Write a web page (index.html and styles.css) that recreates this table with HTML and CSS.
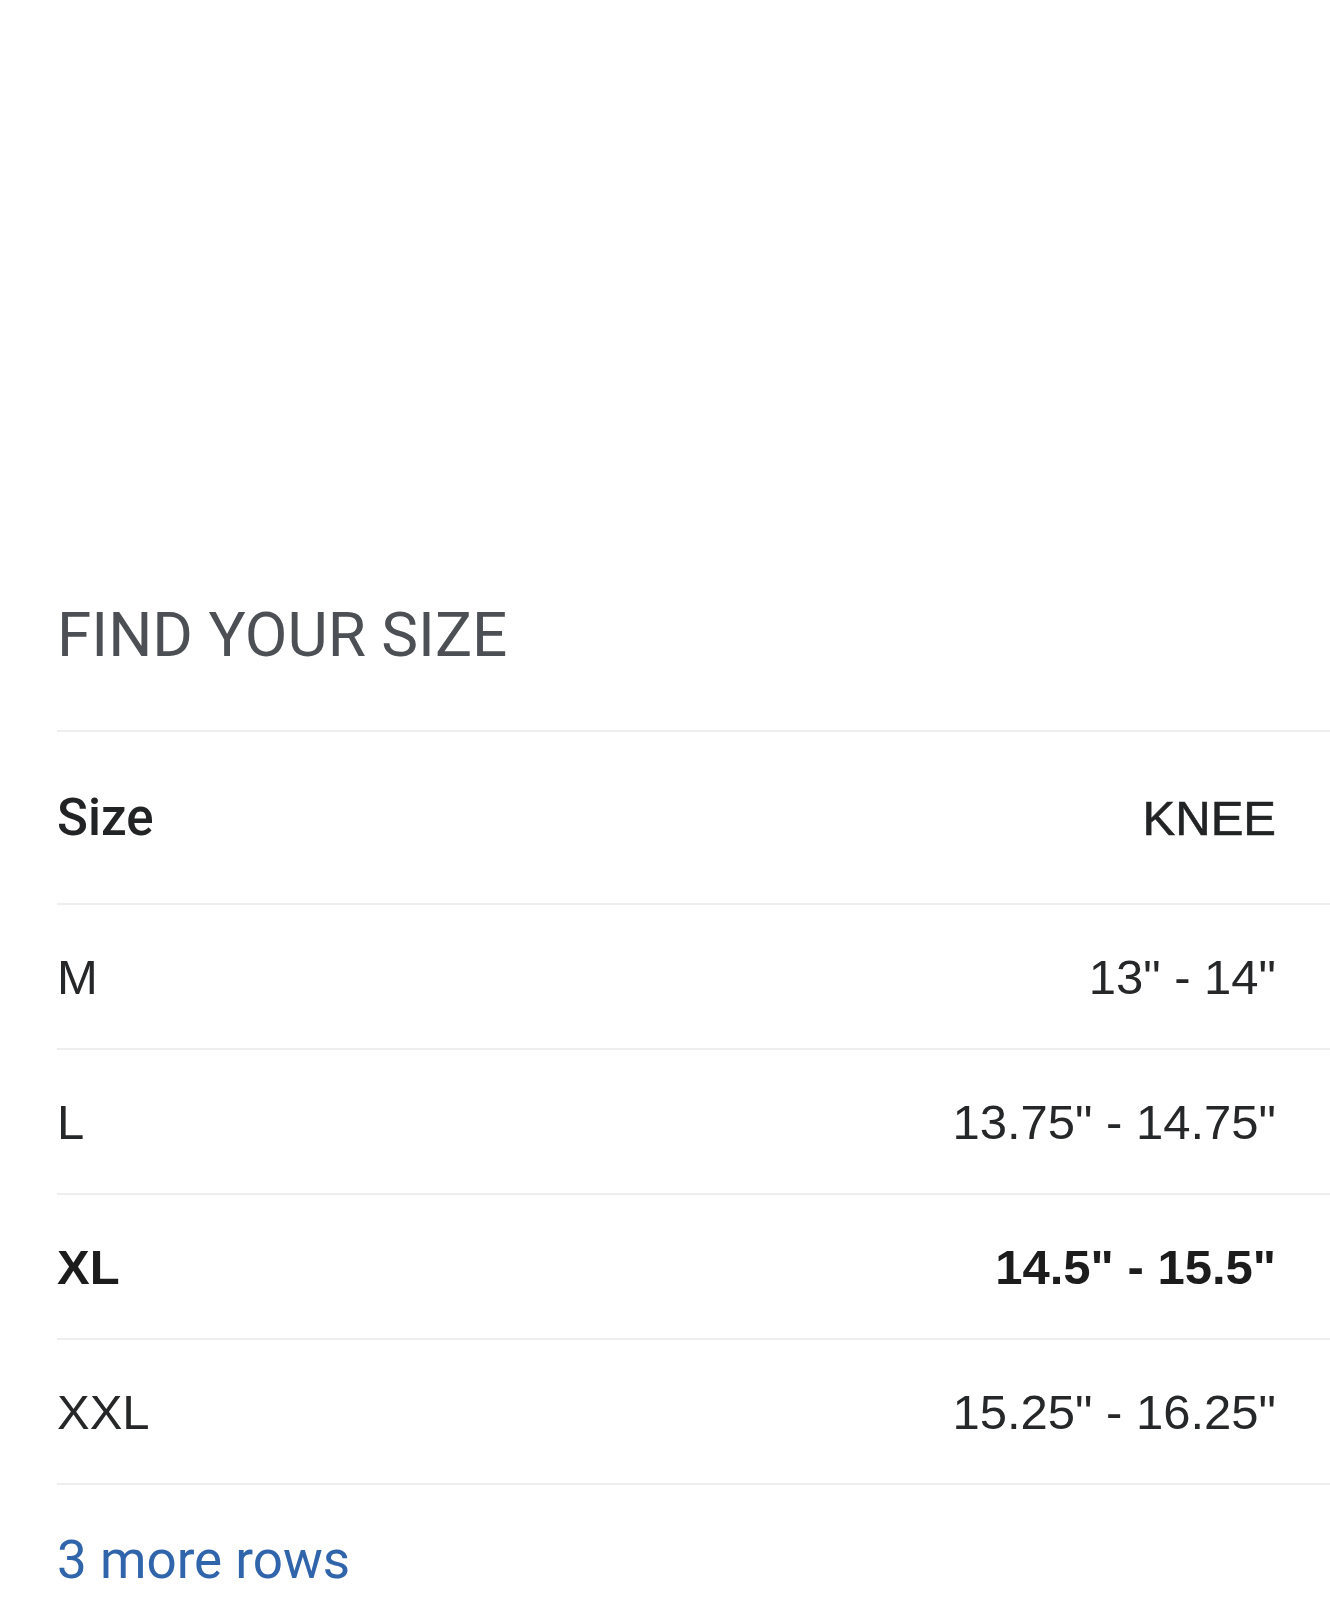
FILE: index.html
```html
<!DOCTYPE html>
<html lang="en">
<head>
<meta charset="utf-8">
<title>Find your size</title>
<link rel="stylesheet" href="styles.css">
</head>
<body>
<main class="page">
  <h2 class="title">FIND YOUR SIZE</h2>
  <div class="table">
    <div class="row head"><span class="cell">Size</span><span class="cell val">KNEE</span></div>
    <div class="row"><span class="cell">M</span><span class="cell val">13" - 14"</span></div>
    <div class="row"><span class="cell">L</span><span class="cell val">13.75" - 14.75"</span></div>
    <div class="row bold"><span class="cell">XL</span><span class="cell val">14.5" - 15.5"</span></div>
    <div class="row"><span class="cell">XXL</span><span class="cell val">15.25" - 16.25"</span></div>
  </div>
  <a class="more" href="#">3 more rows</a>
</main>
</body>
</html>
```
FILE: styles.css
```css
html, body {
  margin: 0;
  padding: 0;
  background: #ffffff;
}
.page {
  padding: 592px 0 0 57px;
}
.title {
  margin: 0;
  font-family: Roboto, "Liberation Sans", sans-serif;
  font-weight: 400;
  font-size: 62px;
  line-height: 86px;
  color: #4c4f54;
  letter-spacing: 0;
}
.table {
  margin-top: 52px;
  border-bottom: 2px solid #eceef0;
}
.row {
  display: flex;
  justify-content: space-between;
  align-items: center;
  height: 143px;
  padding-right: 54px;
  border-top: 2px solid #eceef0;
  font-family: "Liberation Sans", Arial, sans-serif;
  font-size: 49px;
  color: #262728;
}
.row.head {
  height: 171px;
  font-family: Roboto, "Liberation Sans", sans-serif;
  font-weight: 500;
  font-size: 51px;
  color: #222324;
}
.row.head .val {
  font-family: "Liberation Sans", Arial, sans-serif;
  font-weight: 400;
  font-size: 49px;
  -webkit-text-stroke: 0.6px #222324;
}
.row.bold {
  font-weight: 700;
  color: #1c1c1d;
}
.more {
  display: block;
  margin-top: 40px;
  font-family: Roboto, "Liberation Sans", sans-serif;
  font-size: 53px;
  line-height: 70px;
  color: #3064ab;
  text-decoration: none;
}
```
